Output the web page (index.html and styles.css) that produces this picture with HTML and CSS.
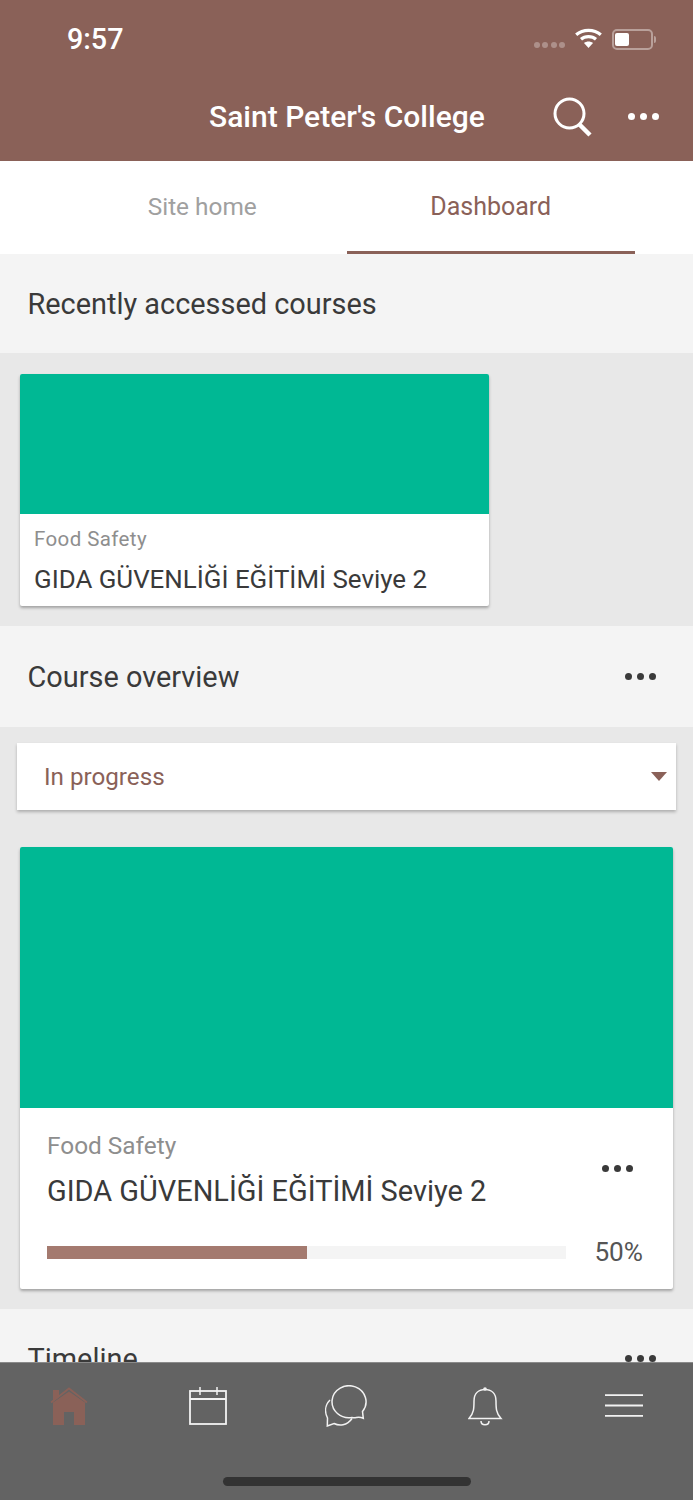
FILE: index.html
```html
<!DOCTYPE html>
<html lang="en">
<head>
<meta charset="UTF-8">
<meta name="viewport" content="width=device-width, initial-scale=1.0">
<title>Saint Peter's College</title>
<link rel="stylesheet" href="styles.css">
</head>
<body>
<div class="app">

  <header class="header">
    <div class="status">
      <span class="time">9:57</span>
      <div class="status-icons">
        <span class="signal"><i></i><i></i><i></i><i></i></span>
        <svg class="wifi" width="27" height="20" viewBox="0 0 27 20">
          <path d="M1.200 6.800C8 .8 19 .8 25.800 6.800" fill="none" stroke="#fff" stroke-width="3.200"/>
          <path d="M6 11.200C10 7.800 17 7.800 21 11.200" fill="none" stroke="#fff" stroke-width="3.200"/>
          <path d="M13.500 20l-4.500-5c2.500-2 6.500-2 9 0z" fill="#fff"/>
        </svg>
        <span class="battery"><span class="battery-level"></span></span>
        <span class="battery-tip"></span>
      </div>
    </div>
    <div class="navbar">
      <h1 class="site-name">Saint Peter's College</h1>
      <svg class="search" width="40" height="40" viewBox="0 0 40 40">
        <circle cx="16.500" cy="16.500" r="14.500" fill="none" stroke="#fff" stroke-width="3"/>
        <path d="M26 27l11 11" stroke="#fff" stroke-width="4.500" fill="none"/>
      </svg>
      <span class="dots dots-white"><i></i><i></i><i></i></span>
    </div>
  </header>

  <nav class="tabs">
    <a class="tab">Site home</a>
    <a class="tab tab-active">Dashboard</a>
  </nav>

  <main class="content">
    <section class="block-head block-first">
      <h2>Recently accessed courses</h2>
    </section>
    <div class="recent">
      <div class="card card-small">
        <div class="card-image"></div>
        <div class="card-body">
          <div class="category">Food Safety</div>
          <div class="course-name">GIDA GÜVENLİĞİ EĞİTİMİ Seviye 2</div>
        </div>
      </div>
    </div>

    <section class="block-head">
      <h2>Course overview</h2>
      <span class="dots"><i></i><i></i><i></i></span>
    </section>
    <div class="overview">
      <div class="select">
        <span>In progress</span>
        <span class="caret"></span>
      </div>
      <div class="card card-large">
        <div class="card-image"></div>
        <div class="card-body">
          <div class="card-top">
            <div>
              <div class="category">Food Safety</div>
              <div class="course-name">GIDA GÜVENLİĞİ EĞİTİMİ Seviye 2</div>
            </div>
            <span class="dots"><i></i><i></i><i></i></span>
          </div>
          <div class="progress-row">
            <div class="progress"><div class="progress-bar" style="width:50%"></div></div>
            <span class="percent">50%</span>
          </div>
        </div>
      </div>
    </div>

    <section class="block-head block-last">
      <h2>Timeline</h2>
      <span class="dots"><i></i><i></i><i></i></span>
    </section>
  </main>

  <footer class="tabbar">
    <div class="tabbar-icons">
      <svg width="38" height="38" viewBox="0 0 38 38">
        <path d="M3 38V15.500L19 4.500l16 11V38H24V25H14v13z" fill="#8a6158"/>
        <path d="M3 3h6v7l-6 4.500z" fill="#8a6158"/>
        <path d="M1 15.500L19 1.500l18 14" fill="none" stroke="#8a6158" stroke-width="1.800"/>
      </svg>
      <svg width="38" height="38" viewBox="0 0 38 38" fill="none" stroke="#f2f2f2">
        <rect x="1" y="4" width="36" height="33" stroke-width="1.800"/>
        <path d="M1 12h36" stroke-width="2"/>
        <path d="M11 0v8M28 0v8" stroke-width="1.500"/>
      </svg>
      <svg width="42" height="42" viewBox="0 0 42 42" fill="none" stroke="#f2f2f2" stroke-width="1.500">
        <path d="M37.500 26.500A17 16 0 1 0 27 32.500C31 33.500 33 31 38.300 33.300z"/>
        <path d="M5 15C0 20-.5 27 2.500 33L2.300 41 9 38.500C14 41 22 41 27 33.500"/>
      </svg>
      <svg width="35" height="40" viewBox="0 0 35 40" fill="none" stroke="#f2f2f2" stroke-width="1.500">
        <path d="M1 32.500C6 27 6 22 6 15 6 7 11 3.500 17 3.500S28 7 28 15C28 22 28 27 33 32.500z"/>
        <circle cx="17" cy="3" r="1.800" fill="#f2f2f2" stroke="none"/>
        <path d="M13 35C13 40 21 40 21 35"/>
      </svg>
      <svg width="38" height="23" viewBox="0 0 38 23" stroke="#f2f2f2" stroke-width="1.800">
        <path d="M0 1.200h38M0 11.500h38M0 21.800h38"/>
      </svg>
    </div>
    <div class="home-indicator"></div>
  </footer>

</div>
</body>
</html>
```

FILE: styles.css
```css
:root {
  --brand: #8a6158;
  --bg: #e8e8e8;
  --head: #f4f4f4;
  --text: #3a3a3a;
  --muted: #8e8e8e;
  --green: #00b894;
}
* { box-sizing: border-box; }
body { margin: 0; font-family: Roboto, "Liberation Sans", sans-serif; background: var(--bg); color: var(--text); }
.app { height: 1500px; display: flex; flex-direction: column; overflow: hidden; }

.header { height: 161px; flex: none; background: var(--brand); color: #fff; }
.status { height: 76px; display: flex; justify-content: space-between; align-items: center; padding: 2px 37px 0 67px; }
.time { font-size: 28.700px; font-weight: 500; }
.status-icons { display: flex; align-items: center; }
.signal { display: flex; gap: 2.500px; margin: 12px 10px 0 0; }
.signal i { width: 6px; height: 6px; border-radius: 50%; background: rgba(255,255,255,.3); }
.wifi { margin-right: 10px; margin-top: -3px; }
.battery { width: 41px; height: 21px; border: 2px solid rgba(255,255,255,.4); border-radius: 5px; padding: 2px 1px; }
.battery-level { display: block; width: 14px; height: 13px; background: #fff; border-radius: 2px; }
.battery-tip { width: 2px; height: 7px; background: rgba(255,255,255,.4); border-radius: 0 2px 2px 0; margin-left: 1px; }
.navbar { height: 85px; display: flex; align-items: center; padding-bottom: 4px; }
.site-name { margin: 0 0 0 209px; font-size: 30px; font-weight: 500; line-height: 1; width: 344px; white-space: nowrap; }
.search { margin-right: 35px; }

.dots { display: flex; gap: 5px; }
.dots i { width: 7px; height: 7px; border-radius: 50%; background: var(--text); }
.dots-white i { background: #fff; }

.tabs { height: 93px; flex: none; background: #fff; display: flex; padding: 0 58px; }
.tab { flex: 1; display: flex; align-items: center; justify-content: center; font-size: 24.400px; color: #a0a0a0; padding-bottom: 3px; }
.tab-active { color: var(--brand); font-size: 25px; border-bottom: 3px solid var(--brand); padding-bottom: 0; }

.content { flex: 1; min-height: 0; overflow: hidden; }
.block-head { height: 101px; background: var(--head); display: flex; align-items: center; justify-content: space-between; padding: 0 37px 0 27.500px; }
.block-first { height: 99px; }
.block-last { padding-bottom: 2px; }
.block-head h2 { margin: 0; font-size: 28.900px; font-weight: 400; }
.recent { padding: 21px 20px 20px; }
.overview { padding: 16px 17px 20px; }

.card { background: #fff; border-radius: 2px; overflow: hidden; box-shadow: 0 2px 3px rgba(0,0,0,.3); }
.card-image { background: var(--green); }
.card-small { width: 469px; height: 232px; }
.card-small .card-image { height: 140px; }
.card-small .card-body { padding: 13px 14px; }
.card-small .category { font-size: 20.500px; letter-spacing: .4px; }
.card-small .course-name { font-size: 25.900px; margin-top: 12px; }
.category { color: var(--muted); line-height: 1.200; }
.course-name { line-height: 1.200; color: var(--text); white-space: nowrap; }

.select { height: 67px; background: #fff; display: flex; align-items: center; justify-content: space-between; padding: 0 9px 0 27px; color: var(--brand); font-size: 24.200px; box-shadow: 0 2px 3px rgba(0,0,0,.25); }
.caret { border-style: solid; border-width: 9px 8px 0; border-color: var(--brand) transparent transparent; }

.card-large { margin: 37px 3px 0; height: 442px; }
.card-large .card-image { height: 261px; }
.card-large .card-body { padding: 23px 30px 0 27px; }
.card-top { display: flex; justify-content: space-between; align-items: center; }
.card-top .dots { margin-bottom: 4px; margin-right: 10px; }
.card-large .category { font-size: 24.400px; }
.card-large .course-name { font-size: 28.950px; margin-top: 14px; }
.progress-row { display: flex; align-items: center; gap: 28px; margin-top: 30px; }
.progress { flex: 1; height: 13px; background: var(--head); }
.progress-bar { height: 100%; background: #a47a6f; }
.percent { font-size: 26.200px; color: #555; line-height: 1; }

.tabbar { height: 138px; flex: none; background: #636363; border-top: 1px solid #8a8a8a; display: flex; flex-direction: column; }
.tabbar-icons { display: grid; grid-template-columns: repeat(5, 1fr); justify-items: center; align-items: center; height: 85px; }
.home-indicator { width: 248px; height: 9px; border-radius: 5px; background: #333; margin: 29px auto 0; }
```
